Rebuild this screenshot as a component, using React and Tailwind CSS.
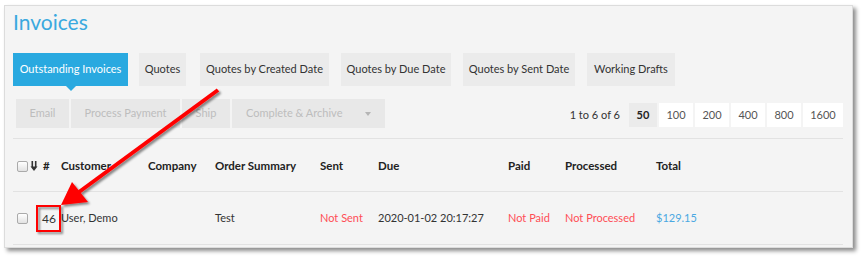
import React from 'react';

const tabs = [
  { label: 'Outstanding Invoices', cls: 'w-[115px] ml-0', active: true },
  { label: 'Quotes', cls: 'w-[47px] ml-[11px]' },
  { label: 'Quotes by Created Date', cls: 'w-[129px] ml-[14px]' },
  { label: 'Quotes by Due Date', cls: 'w-[110px] ml-[12px]' },
  { label: 'Quotes by Sent Date', cls: 'w-[112px] ml-[12px]' },
  { label: 'Working Drafts', cls: 'w-[88px] ml-[12px]' },
];

const actions = [
  { label: 'Email', cls: 'w-[53px]' },
  { label: 'Process Payment', cls: 'w-[109px]' },
  { label: 'Ship', cls: 'w-[48px]' },
];

const pages = [
  { label: '50', cls: 'w-[28px] bg-[#ebebeb] font-bold text-[#222]' },
  { label: '100', cls: 'w-[34px] bg-white text-[#555]' },
  { label: '200', cls: 'w-[34px] bg-white text-[#555]' },
  { label: '400', cls: 'w-[34px] bg-white text-[#555]' },
  { label: '800', cls: 'w-[34px] bg-white text-[#555]' },
  { label: '1600', cls: 'w-[40px] bg-white text-[#555]' },
];

const cols = 'grid grid-cols-[27px_21px_87px_67px_105px_58px_130px_57px_91px_1fr] items-center';

const Checkbox = () => (
  <span className="block w-[11px] h-[11px] rounded-[2px] border border-[#aaa] bg-gradient-to-b from-white to-[#e2e2e2]" />
);

const SortIcon = () => (
  <svg width="8" height="10" viewBox="0 0 8 10" className="ml-[2px]">
    <path d="M2.3 0v6M5.7 0v6" stroke="#333" strokeWidth="1.6" />
    <path d="M0.5 5.5h7L4 10z" fill="#333" />
  </svg>
);

const Annotation = () => (
  <svg width="862" height="257" className="absolute top-0 left-0 pointer-events-none">
    <defs>
      <filter id="sh" x="-20%" y="-20%" width="140%" height="140%">
        <feDropShadow dx="2" dy="2" stdDeviation="1.2" floodColor="#000" floodOpacity="0.45" />
      </filter>
    </defs>
    <g filter="url(#sh)">
      <line x1="218" y1="90" x2="79" y2="192" stroke="#ff0000" strokeWidth="4" />
      <polygon points="61,205 72,182 88,202" fill="#ff0000" />
      <rect x="37" y="206" width="23" height="25" fill="none" stroke="#ff0000" strokeWidth="2" />
    </g>
  </svg>
);

const App = () => {
  return (
    <div className="relative w-[862px] h-[257px] bg-white overflow-hidden" style={{ fontFamily: 'Lato, "Open Sans", sans-serif' }}>
      <div className="ml-[4px] mt-[5px] w-[849px] h-[243px] bg-[#f4f4f4] border border-[#dcdcdc] shadow-[3px_3px_4px_rgba(0,0,0,0.45)] pl-[8px] pr-[9px]">
        <h1 className="mt-[2px] h-[28px] leading-[28px] text-[21px] text-[#3aa9df]">Invoices</h1>

        <div className="flex mt-[17px]">
          {tabs.map((t) => (
            <div
              key={t.label}
              className={`relative h-[33px] flex items-center justify-center text-[11px] ${t.cls} ${t.active ? 'bg-[#29a9e0] text-white' : 'bg-[#ebebeb] text-[#333]'}`}
            >
              {t.label}
              {t.active && (
                <span className="absolute left-1/2 -translate-x-1/2 top-full w-0 h-0 border-l-[5px] border-r-[5px] border-t-[5px] border-l-transparent border-r-transparent border-t-[#29a9e0]" />
              )}
            </div>
          ))}
        </div>

        <div className="flex items-center mt-[13px]">
          <div className="flex gap-[2px] ml-[3px]">
            {actions.map((a) => (
              <div key={a.label} className={`h-[29px] flex items-center justify-center bg-[#e8e8e8] text-[#bdbdbd] text-[11px] ${a.cls}`}>
                {a.label}
              </div>
            ))}
            <div className="h-[29px] w-[153px] flex items-center bg-[#e8e8e8] text-[#bdbdbd] text-[11px] pl-[14px]">
              Complete &amp; Archive
              <span className="ml-auto mr-[14px] w-0 h-0 border-l-[3.5px] border-r-[3.5px] border-t-[4px] border-l-transparent border-r-transparent border-t-[#b5b5b5]" />
            </div>
          </div>
          <div className="ml-auto flex items-center mt-[3px]">
            <span className="text-[11px] text-[#333] mr-[9px]">1 to 6 of 6</span>
            <div className="flex gap-[2px]">
              {pages.map((p) => (
                <div key={p.label} className={`h-[24px] flex items-center justify-center text-[11px] ${p.cls}`}>
                  {p.label}
                </div>
              ))}
            </div>
          </div>
        </div>

        <div className="mt-[10px] border-t border-[#e2e2e2]">
          <div className={`${cols} h-[53px] pt-[2px] border-b border-[#e2e2e2] text-[11.5px] font-bold text-[#222]`}>
            <div className="flex items-center pl-[4px]">
              <Checkbox />
              <SortIcon />
            </div>
            <div className="pl-[3px]">#</div>
            <div>Customer</div>
            <div>Company</div>
            <div>Order Summary</div>
            <div>Sent</div>
            <div>Due</div>
            <div>Paid</div>
            <div>Processed</div>
            <div>Total</div>
          </div>
          <div className={`${cols} h-[53px] pt-[1px] border-b border-[#e2e2e2] text-[11px] text-[#333]`}>
            <div className="pl-[4px]"><Checkbox /></div>
            <div className="pl-[2px] text-[12px]">46</div>
            <div>User, Demo</div>
            <div></div>
            <div>Test</div>
            <div className="text-[#ff4d55]">Not Sent</div>
            <div>2020-01-02 20:17:27</div>
            <div className="text-[#ff4d55]">Not Paid</div>
            <div className="text-[#ff4d55]">Not Processed</div>
            <div className="text-[#4aa8e2]">$129.15</div>
          </div>
        </div>
      </div>
      <Annotation />
    </div>
  );
};

export default App;
